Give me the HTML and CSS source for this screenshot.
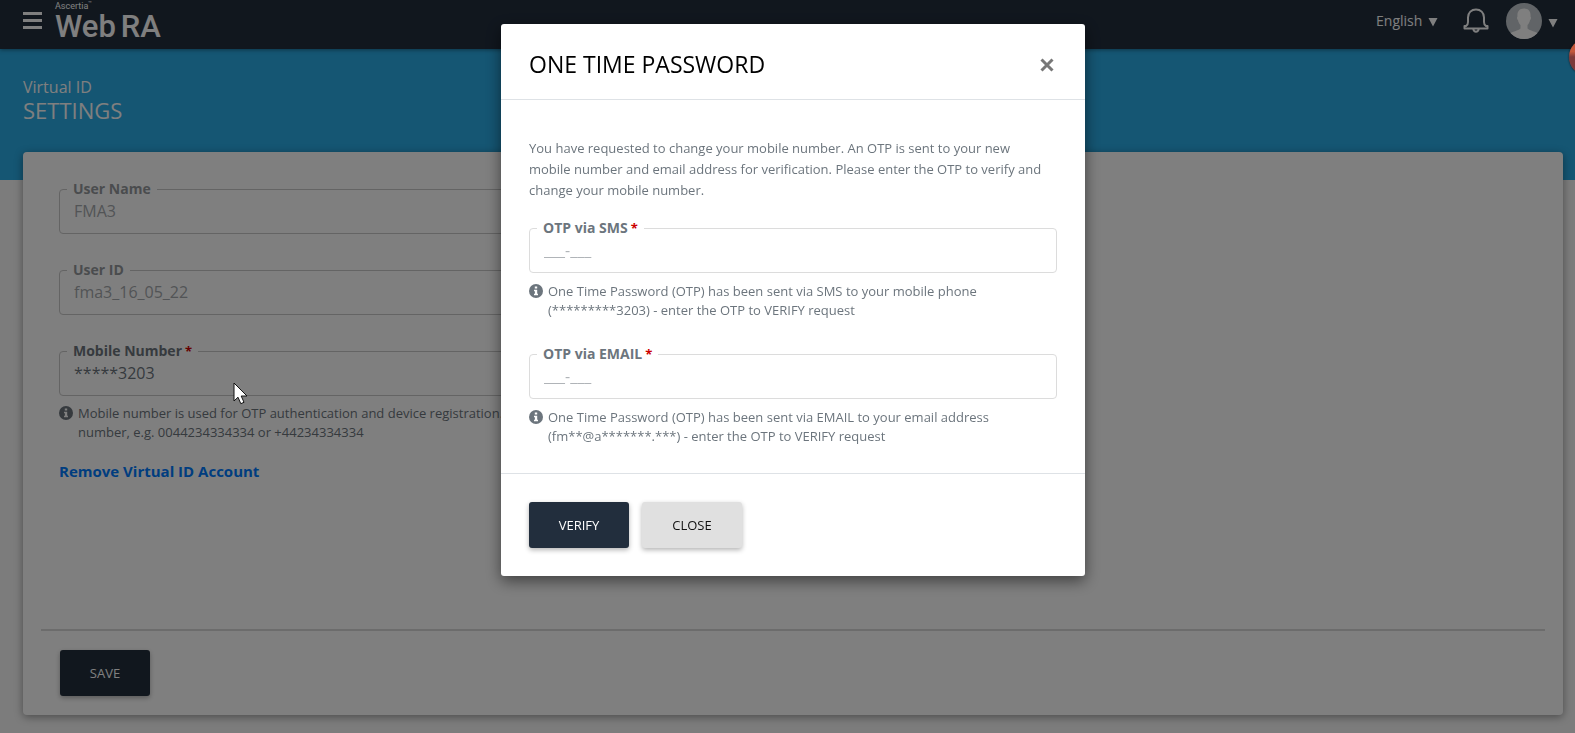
FILE: index.html
```html
<!DOCTYPE html>
<html lang="en">
<head>
<meta charset="utf-8">
<title>Web RA - Settings</title>
<link rel="stylesheet" href="styles.css">
</head>
<body>
<div class="page">
  <header class="topbar">
    <button class="menu-btn" type="button" aria-label="Menu"><span></span><span></span><span></span></button>
    <div class="brand">
      <span class="brand-top">Ascertia<sup>™</sup></span>
      <span class="brand-name"><span>Web</span><span>RA</span></span>
    </div>
    <nav class="tools">
      <button class="lang" type="button">English <svg class="caret" width="10" height="10" viewBox="0 0 10 10"><path d="M0.500 1h9L5 9.500z"/></svg></button>
      <button class="bell" type="button" aria-label="Notifications"><svg width="26" height="26" viewBox="0 0 26 26"><path d="M1.500 20.500v-2.500h1.500q2-1 2-4V9.500C5 4.500 8.500 1.500 13 1.500s8 3 8 8V14q0 3 2 4h1.500v2.500z"/><path d="M10.300 20.800q.5 2.900 2.700 2.900t2.700-2.900"/></svg></button>
      <button class="user" type="button" aria-label="Account">
        <svg width="36" height="36" viewBox="0 0 36 36"><defs><clipPath id="disc"><circle cx="18" cy="18" r="18"/></clipPath></defs><g clip-path="url(#disc)"><rect width="36" height="36" fill="#c3c9ce"/><path d="M18 5.500c5 0 7 3.500 6.500 8 .8.300.5 3-.5 3.500-.4 2.500-1.500 4-2.500 5v3.500c2 2.500 8.500 2.500 12 6V38H2.500v-6.500c3.500-3.500 10-3.500 12-6V22c-1-1-2.100-2.500-2.500-5-1-.5-1.300-3.200-.5-3.500-.5-4.500 1.500-8 6.500-8z" fill="#fff"/></g></svg>
        <svg class="caret" width="10" height="10" viewBox="0 0 10 10"><path d="M0.500 1h9L5 9.500z"/></svg>
      </button>
    </nav>
  </header>
  <div class="banner">
    <p>Virtual ID</p>
    <h1>SETTINGS</h1>
  </div>
  <main class="card">
    <form class="settings">
      <div class="field disabled">
        <label for="uname">User Name</label>
        <input id="uname" type="text" value="FMA3" disabled>
      </div>
      <div class="field disabled">
        <label for="uid">User ID</label>
        <input id="uid" type="text" value="fma3_16_05_22" disabled>
      </div>
      <div class="field">
        <label for="mobile">Mobile Number<i>*</i></label>
        <input id="mobile" type="text" value="*****3203">
      </div>
      <p class="hint"><svg width="14" height="14" viewBox="0 0 14 14"><circle cx="7" cy="7" r="7"/><path d="M5.800 2.500h2.400v2H5.800zM5 5.800h3.200v4H9V11.300H5V9.800h.9V7.200H5z" fill="#fff"/></svg><span>Mobile number is used for OTP authentication and device registration. Enter the mobile<br>number, e.g. 0044234334334 or +44234334334</span></p>
      <a class="remove" href="#">Remove Virtual ID Account</a>
    </form>
    <footer class="card-foot"><button class="btn dark save" type="button">SAVE</button></footer>
  </main>
</div>

<div class="backdrop">
  <section class="modal" role="dialog" aria-labelledby="otp-title">
    <header class="modal-head">
      <h2 id="otp-title">ONE TIME PASSWORD</h2>
      <button class="close-x" type="button" aria-label="Close"><svg width="14" height="14" viewBox="0 0 14 14"><path d="M1.500 1.500l11 11M12.500 1.500l-11 11"/></svg></button>
    </header>
    <div class="modal-body">
      <p class="intro">You have requested to change your mobile number. An OTP is sent to your new mobile number and email address for verification. Please enter the OTP to verify and change your mobile number.</p>
      <div class="field">
        <label for="sms">OTP via SMS<i>*</i></label>
        <input id="sms" type="text" placeholder="___-___">
      </div>
      <p class="hint"><svg width="14" height="14" viewBox="0 0 14 14"><circle cx="7" cy="7" r="7"/><path d="M5.800 2.500h2.400v2H5.800zM5 5.800h3.200v4H9V11.300H5V9.800h.9V7.200H5z" fill="#fff"/></svg><span>One Time Password (OTP) has been sent via SMS to your mobile phone (*********3203) - enter the OTP to VERIFY request</span></p>
      <div class="field">
        <label for="email">OTP via EMAIL<i>*</i></label>
        <input id="email" type="text" placeholder="___-___">
      </div>
      <p class="hint"><svg width="14" height="14" viewBox="0 0 14 14"><circle cx="7" cy="7" r="7"/><path d="M5.800 2.500h2.400v2H5.800zM5 5.800h3.200v4H9V11.300H5V9.800h.9V7.200H5z" fill="#fff"/></svg><span>One Time Password (OTP) has been sent via EMAIL to your email address (fm**@a*******.***) - enter the OTP to VERIFY request</span></p>
    </div>
    <footer class="modal-foot">
      <button class="btn dark" type="button">VERIFY</button>
      <button class="btn light" type="button">CLOSE</button>
    </footer>
  </section>
</div>
<div class="bubble"></div>
<svg class="pointer" width="15" height="23" viewBox="0 0 15 23"><path d="M1 1v18l4-3.800 2.800 6.500 3.200-1.400-2.800-6.300H14z"/></svg>
</body>
</html>
```
FILE: styles.css
```css
* { box-sizing: border-box; }
body, h1, h2, p { margin: 0; }
body {
  font-family: "Open Sans", "Noto Sans", sans-serif;
  font-size: 14px;
  color: #6c757d;
  background: #f8f8f8;
  overflow: hidden;
}
button, input { font: inherit; }
button { border: 0; padding: 0; background: none; color: inherit; }

.page { min-height: 100vh; display: flex; flex-direction: column; }

.topbar {
  height: 49px;
  display: flex;
  align-items: center;
  padding: 0 17px 0 23px;
  background: #222e3d;
  color: #fff;
  box-shadow: 0 1px 4px rgba(0, 0, 0, .4);
  z-index: 1;
}
.menu-btn { display: flex; flex-direction: column; gap: 4px; width: 19px; margin-bottom: 8px; }
.menu-btn span { height: 3px; background: #fff; }
.brand { display: flex; flex-direction: column; margin: 0 auto 7px 13px; font-family: Roboto, sans-serif; }
.brand-top { font-size: 9px; line-height: 12px; }
.brand-top sup { font-size: 6px; line-height: 0; }
.brand-name { display: flex; gap: 5px; font-size: 31px; font-weight: 500; line-height: 30px; }
.tools { display: flex; align-items: center; margin-bottom: 8px; }
.lang { font-size: 14px; }
.lang .caret { margin-left: 2px; vertical-align: -1px; }
.caret { fill: #fff; }
.bell { margin: 0 17px 0 25px; height: 26px; }
.bell svg { display: block; fill: none; stroke: #fff; stroke-width: 2; stroke-linejoin: round; }
.user { display: flex; align-items: center; gap: 6px; }
.user .caret { margin-top: 4px; }

.banner {
  height: 131px;
  padding: 27px 23px;
  background: #2aace6;
  color: #fff;
}
.banner p { font-size: 16px; line-height: 22px; }
.banner h1 { font-size: 22px; font-weight: 400; line-height: 24px; }

.card {
  flex: 1;
  display: flex;
  flex-direction: column;
  margin: -28px 12px 18px 23px;
  padding: 37px 18px 19px;
  background: #fff;
  border-radius: 4px;
  box-shadow: 0 2px 8px rgba(0, 0, 0, .4);
}
.settings { flex: 1; width: 50%; padding: 0 18px; }
.settings .field { margin-bottom: 36px; }
.settings .field:nth-of-type(3) { margin-bottom: 8px; }

.field { position: relative; }
.field label {
  position: absolute;
  left: 8px;
  top: -10px;
  padding: 0 6px;
  background: #fff;
  font-size: 14px;
  font-weight: 700;
  line-height: 20px;
}
.field label i { margin-left: 3px; color: #c00; font-size: 13px; font-style: normal; }
.field input {
  display: block;
  width: 100%;
  height: 45px;
  padding: 0 14px 2px;
  border: 1px solid #dcdcdc;
  border-radius: 4px;
  background: #fff;
  color: #6c757d;
  font-size: 16px;
}
.field input::placeholder { color: #b0b4b8; opacity: 1; }
.disabled label { color: #95999d; }
.disabled input { color: #a5a9ad; }
.settings .field input { border-color: #c8c8c8; }

.hint { display: flex; gap: 5px; font-size: 13px; line-height: 19px; }
.hint svg { flex: none; margin-top: 2px; fill: #6c757d; }
.remove { display: block; margin-top: 18px; color: #007bff; font-size: 15px; font-weight: 700; line-height: 22px; text-decoration: none; }

.card-foot { padding: 19px 19px 0; border-top: 2px solid #d8d8d8; }

.btn {
  height: 46px;
  width: 100px;
  border-radius: 3px;
  font-size: 13px;
  box-shadow: 0 2px 5px rgba(0, 0, 0, .3);
}
.dark { background: #222e3d; color: #fff; }
.light { background: #e0e0e0; color: #111; }
.save { width: 90px; }

.backdrop {
  position: fixed;
  inset: 0;
  z-index: 5;
  display: flex;
  justify-content: center;
  align-items: flex-start;
  padding: 24px 0 24px 11px;
  background: rgba(0, 0, 0, .5);
}
.modal {
  width: 584px;
  max-width: 100%;
  background: #fff;
  border-radius: 3px;
  box-shadow: 0 5px 15px rgba(0, 0, 0, .5);
}
.modal-head {
  display: flex;
  justify-content: space-between;
  align-items: center;
  padding: 26px 31px 21px 28px;
  border-bottom: 1px solid #dee2e6;
}
.modal-head h2 { color: #000; font-size: 23px; font-weight: 400; line-height: 28px; }
.close-x { margin-top: 2px; }
.close-x svg { display: block; fill: none; stroke: #777; stroke-width: 3; }
.modal-body { padding: 38px 28px 27px; }
.intro { margin-bottom: 27px; padding-right: 10px; font-size: 13px; line-height: 21px; }
.modal .hint { margin-top: 9px; }
.modal .hint + .field { margin-top: 34px; }
.modal-foot { display: flex; gap: 13px; padding: 28px; border-top: 1px solid #dee2e6; }

.bubble {
  position: fixed;
  right: -28px;
  top: 39px;
  z-index: 6;
  width: 34px;
  height: 36px;
  border-radius: 50%;
  background: linear-gradient(#c4583c 35%, #7c3a3a 50%);
  box-shadow: 0 0 2px #111;
}
.pointer { position: fixed; left: 233px; top: 382px; z-index: 7; fill: #fff; stroke: #111; }
```
